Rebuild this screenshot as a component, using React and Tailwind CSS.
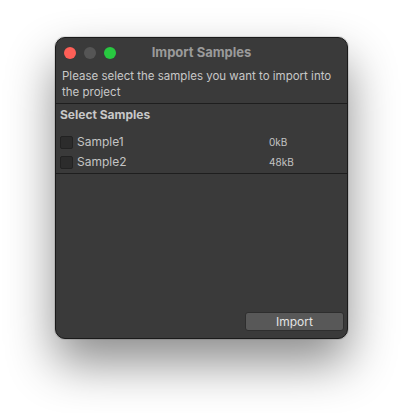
export default function App() {
  const samples = [
    { name: 'Sample1', size: '0kB' },
    { name: 'Sample2', size: '48kB' },
  ];

  return (
    <div className="w-[403px] h-[413px] bg-white pl-[55px] pt-[37px] font-['Inter',sans-serif]">
      <div className="w-[293px] h-[302px] rounded-[10px] bg-[#3a3a3a] border border-[#1a1a1a] shadow-[0_24px_48px_rgba(0,0,0,0.45),0_0_0_1px_rgba(0,0,0,0.1)] flex flex-col overflow-hidden">
        {/* title bar */}
        <div className="relative h-[28px] flex items-center pl-[8px] shrink-0">
          <div className="flex gap-[8px] pt-[1px]">
            <span className="w-[12px] h-[12px] rounded-full bg-[#fe5f57]" />
            <span className="w-[12px] h-[12px] rounded-full bg-[#555555]" />
            <span className="w-[12px] h-[12px] rounded-full bg-[#28c840]" />
          </div>
          <div className="absolute inset-0 flex items-center justify-center pt-[1px] text-[13px] font-bold text-[#9a9a9a]">
            Import Samples
          </div>
        </div>

        {/* description */}
        <div className="pl-[6px] pr-[2px] pt-[2px] pb-[3px] text-[11.5px] leading-[16px] text-[#c8c8c8]">
          Please select the samples you want to import into the project
        </div>
        <div className="h-px bg-[#1e1e1e]" />

        {/* list */}
        <div className="px-[4px] pt-[3px] text-[12px] leading-[16px] font-bold text-[#c8c8c8]">
          Select Samples
        </div>
        <div className="pt-[9px] flex flex-col">
          {samples.map((s) => (
            <div key={s.name} className="h-[20px] flex items-center pl-[4px]">
              <span className="w-[13px] h-[13px] rounded-[2px] bg-[#2c2c2c] border border-[#222]" />
              <span className="ml-[4px] w-[192px] text-[12px] text-[#c4c4c4]">{s.name}</span>
              <span className="text-[10px] text-[#c4c4c4]">{s.size}</span>
            </div>
          ))}
        </div>
        <div className="h-px bg-[#1e1e1e] mt-px" />

        <div className="flex-1" />
        <div className="flex justify-end pr-[3px] pb-[7px]">
          <button className="w-[99px] h-[19px] rounded-[3px] bg-[#585858] border border-[#2e2e2e] text-[12px] leading-none text-[#e4e4e4]">
            Import
          </button>
        </div>
      </div>
    </div>
  );
}
